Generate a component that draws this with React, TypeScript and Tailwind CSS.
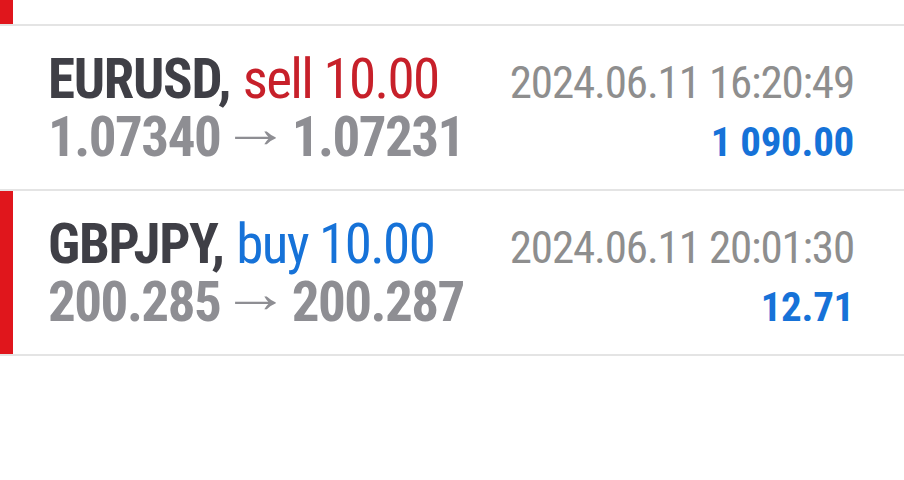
import React from "react";

type Deal = {
  symbol: string;
  side: "buy" | "sell";
  volume: string;
  open: string;
  close: string;
  time: string;
  profit: string;
  marked: boolean;
};

const deals: Deal[] = [
  {
    symbol: "EURUSD",
    side: "sell",
    volume: "10.00",
    open: "1.07340",
    close: "1.07231",
    time: "2024.06.11 16:20:49",
    profit: "1 090.00",
    marked: false,
  },
  {
    symbol: "GBPJPY",
    side: "buy",
    volume: "10.00",
    open: "200.285",
    close: "200.287",
    time: "2024.06.11 20:01:30",
    profit: "12.71",
    marked: true,
  },
];

function Row({ d }: { d: Deal }) {
  return (
    <div className="flex h-[165px] border-b-2 border-[#e4e4e4]">
      <div className={d.marked ? "w-[13px] bg-[#e0161c]" : "w-[13px]"} />
      <div className="flex flex-1 flex-col pl-[35px] pr-[50px] pt-[24px]">
        <div className="flex h-[59px] items-baseline justify-between leading-[59px]">
          <div className="text-[55px] [font-stretch:condensed]">
            <span className="inline-block font-bold tracking-[-1.3px] text-[#3f3f46]">{d.symbol},</span>{" "}
            <span
              className={
                d.side === "sell"
                  ? "inline-block tracking-[-1.6px] text-[#c7202a]"
                  : "inline-block tracking-[-1.6px] text-[#1672d8]"
              }
            >
              {d.side} {d.volume}
            </span>
          </div>
          <div className="text-[45px] tracking-[-1.15px] text-[#8e8e8e] [font-stretch:condensed]">
            {d.time}
          </div>
        </div>
        <div className="flex h-[56px] items-baseline justify-between leading-[56px]">
          <div className="text-[55px] font-bold tracking-[-1.5px] text-[#8e8e93] [font-stretch:condensed] [word-spacing:-3px]">
            <span className="inline-block">{d.open}</span>{" "}
            <span className="inline-block -translate-y-[9px] scale-x-[1.25] font-normal leading-[30px] tracking-normal">
              →
            </span>{" "}
            <span className="inline-block">{d.close}</span>
          </div>
          <div className="text-[41px] font-bold tracking-[-0.3px] text-[#1672d8] [font-stretch:condensed]">
            {d.profit}
          </div>
        </div>
      </div>
    </div>
  );
}

export default function App() {
  return (
    <div
      className="h-[480px] w-[904px] overflow-hidden bg-white"
      style={{ fontFamily: "Roboto, 'Noto Sans', sans-serif" }}
    >
      <div className="flex h-[26px] border-b-2 border-[#e4e4e4]">
        <div className="w-[13px] bg-[#e0161c]" />
      </div>
      {deals.map((d) => (
        <Row key={d.symbol} d={d} />
      ))}
    </div>
  );
}
